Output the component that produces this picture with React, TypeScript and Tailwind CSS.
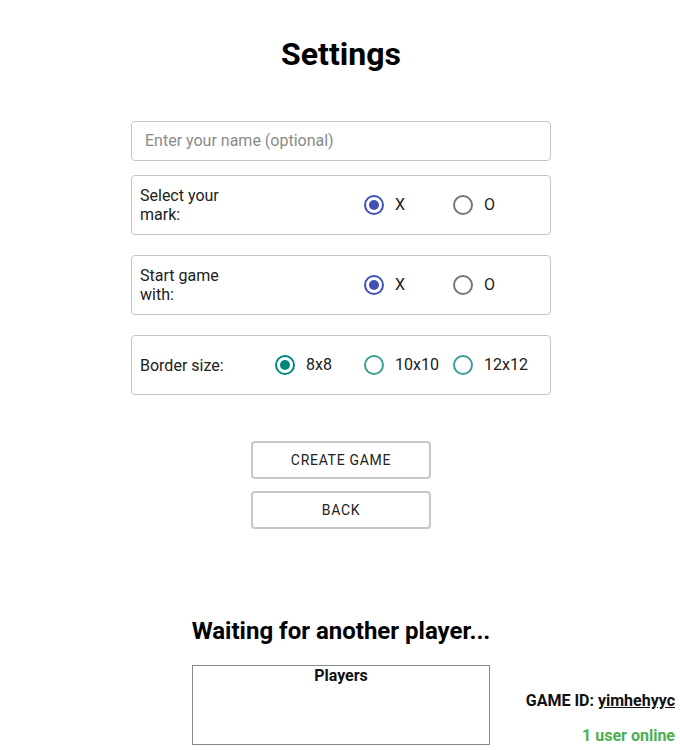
import React from "react";

type Opt = { label: string; checked: boolean };

function Radio({ checked, color, uncheckedColor, label }: { checked: boolean; color: string; uncheckedColor: string; label: string }) {
  return (
    <label className="flex w-[89px] items-center pl-[11px]">
      <span
        className="flex h-5 w-5 items-center justify-center rounded-full border-2"
        style={{ borderColor: checked ? color : uncheckedColor }}
      >
        {checked && <span className="h-2.5 w-2.5 rounded-full" style={{ backgroundColor: color }} />}
      </span>
      <span className="ml-[11px] text-[16px] leading-none text-[#212121]">{label}</span>
    </label>
  );
}

function Row({ title, options, color, uncheckedColor }: { title: string; options: Opt[]; color: string; uncheckedColor: string }) {
  return (
    <div className="flex h-[60px] items-center justify-between rounded-[4px] border border-[#c4c4c4] pl-[8px] pr-[19px]">
      <div className="w-[100px] text-[16px] leading-[19px] text-[#212121]">{title}</div>
      <div className="flex">
        {options.map((o) => (
          <Radio key={o.label} checked={o.checked} color={color} uncheckedColor={uncheckedColor} label={o.label} />
        ))}
      </div>
    </div>
  );
}

export default function App() {
  return (
    <div className="min-h-[750px] w-[680px] bg-white font-['Roboto',sans-serif] text-[#212121]">
      <div className="pl-[2px]">
        <h1 className="pt-[35px] text-center text-[32px] font-bold leading-[38px] text-black">Settings</h1>
        <div className="mx-auto mt-[48px] flex w-[420px] flex-col">
          <input
            className="h-10 w-full rounded-[4px] border border-[#c4c4c4] px-[13px] pb-[1px] text-[16px] outline-none placeholder:text-[#8a8a8a]"
            placeholder="Enter your name (optional)"
          />
          <div className="mt-[14px] flex flex-col gap-5">
            <Row
              title="Select your mark:"
              color="#3f51b5"
              uncheckedColor="#757575"
              options={[
                { label: "X", checked: true },
                { label: "O", checked: false },
              ]}
            />
            <Row
              title="Start game with:"
              color="#3f51b5"
              uncheckedColor="#757575"
              options={[
                { label: "X", checked: true },
                { label: "O", checked: false },
              ]}
            />
            <Row
              title="Border size:"
              color="#00897b"
              uncheckedColor="#3a9e92"
              options={[
                { label: "8x8", checked: true },
                { label: "10x10", checked: false },
                { label: "12x12", checked: false },
              ]}
            />
          </div>
        </div>
        <div className="mt-[46px] flex flex-col items-center gap-3">
          <button className="h-[38px] w-[180px] rounded-[4px] border-2 border-[#c8c8c8] text-[14px] font-normal tracking-[0.7px] text-[#222]">
            CREATE GAME
          </button>
          <button className="h-[38px] w-[180px] rounded-[4px] border-2 border-[#c8c8c8] text-[14px] font-normal tracking-[0.7px] text-[#222]">
            BACK
          </button>
        </div>
        <h2 className="mt-[87px] text-center text-[24px] font-bold leading-[30px] text-black">Waiting for another player...</h2>
      </div>
      <div className="mt-[19px] grid grid-cols-[192px_298px_1fr]">
        <div />
        <div className="h-[80px] border border-[#888888] text-center text-[16px] font-bold leading-[19px] text-[#111]">Players</div>
        <div className="flex flex-col items-end justify-end gap-[16px] pr-[5px]">
          <div className="text-[16px] font-bold leading-[19px] text-[#111]">
            GAME ID: <span className="underline">yimhehyyc</span>
          </div>
          <div className="text-[16px] font-bold leading-[19px] text-[#4caf50]">1 user online</div>
        </div>
      </div>
    </div>
  );
}
